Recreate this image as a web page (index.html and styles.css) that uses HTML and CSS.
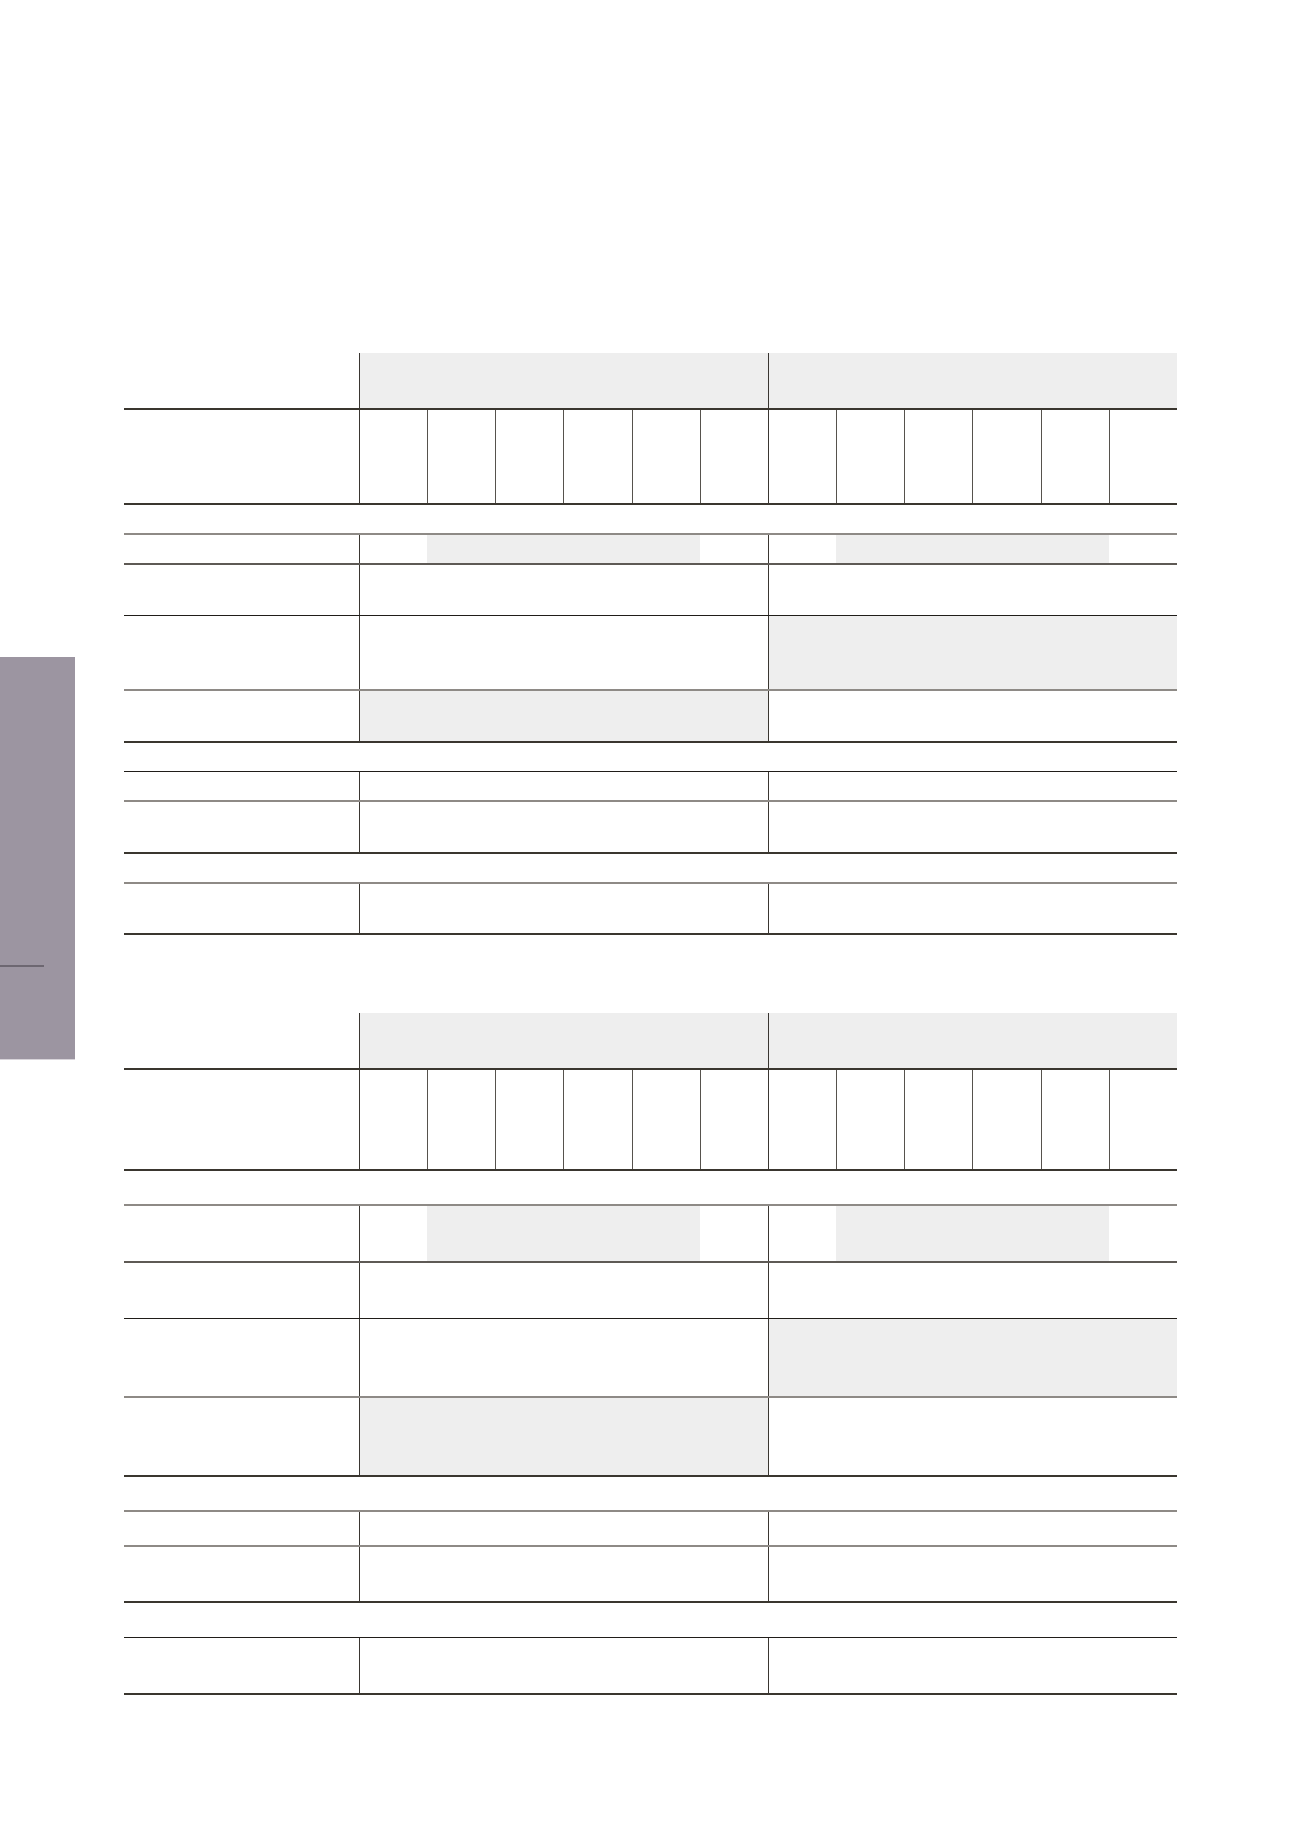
FILE: index.html
```html
<!DOCTYPE html>
<html lang="en">
<head>
<meta charset="utf-8">
<title>Tables</title>
<link rel="stylesheet" href="styles.css">
</head>
<body>
<div class="page">
  <div class="tab"><div class="tab-line"></div></div>
  <div class="content">
    <div class="tbl">
      <div class="row h57 b-thick">
        <div class="cell"></div><div class="cell g fill"></div><div class="cell g fill"></div>
      </div>
      <div class="row split h95 b-thick">
        <div class="cell"></div>
        <div class="cell g"></div><div class="cell s"></div><div class="cell s"></div><div class="cell s"></div><div class="cell s"></div><div class="cell s"></div>
        <div class="cell g"></div><div class="cell s"></div><div class="cell s"></div><div class="cell s"></div><div class="cell s"></div><div class="cell s"></div>
      </div>
      <div class="row section h30 b-gray"></div>
      <div class="row split h30 b-mid">
        <div class="cell"></div>
        <div class="cell g"></div><div class="cell fill"></div><div class="cell fill"></div><div class="cell fill"></div><div class="cell fill"></div><div class="cell"></div>
        <div class="cell g"></div><div class="cell fill"></div><div class="cell fill"></div><div class="cell fill"></div><div class="cell fill"></div><div class="cell"></div>
      </div>
      <div class="row h51 b-dark">
        <div class="cell"></div><div class="cell g"></div><div class="cell g"></div>
      </div>
      <div class="row h75 b-gray">
        <div class="cell"></div><div class="cell g"></div><div class="cell g fill"></div>
      </div>
      <div class="row h52 b-thick">
        <div class="cell"></div><div class="cell g fill"></div><div class="cell g"></div>
      </div>
      <div class="row section h29 b-dark"></div>
      <div class="row h30 b-gray">
        <div class="cell"></div><div class="cell g"></div><div class="cell g"></div>
      </div>
      <div class="row h52 b-thick">
        <div class="cell"></div><div class="cell g"></div><div class="cell g"></div>
      </div>
      <div class="row section h30 b-gray"></div>
      <div class="row h51 b-thick">
        <div class="cell"></div><div class="cell g"></div><div class="cell g"></div>
      </div>
    </div>

    <div class="tbl tbl-second">
      <div class="row h57 b-thick">
        <div class="cell"></div><div class="cell g fill"></div><div class="cell g fill"></div>
      </div>
      <div class="row split h101 b-thick">
        <div class="cell"></div>
        <div class="cell g"></div><div class="cell s"></div><div class="cell s"></div><div class="cell s"></div><div class="cell s"></div><div class="cell s"></div>
        <div class="cell g"></div><div class="cell s"></div><div class="cell s"></div><div class="cell s"></div><div class="cell s"></div><div class="cell s"></div>
      </div>
      <div class="row section h35 b-gray"></div>
      <div class="row split h57 b-mid">
        <div class="cell"></div>
        <div class="cell g"></div><div class="cell fill"></div><div class="cell fill"></div><div class="cell fill"></div><div class="cell fill"></div><div class="cell"></div>
        <div class="cell g"></div><div class="cell fill"></div><div class="cell fill"></div><div class="cell fill"></div><div class="cell fill"></div><div class="cell"></div>
      </div>
      <div class="row h56 b-dark">
        <div class="cell"></div><div class="cell g"></div><div class="cell g"></div>
      </div>
      <div class="row h79 b-gray">
        <div class="cell"></div><div class="cell g"></div><div class="cell g fill"></div>
      </div>
      <div class="row h79 b-thick">
        <div class="cell"></div><div class="cell g fill"></div><div class="cell g"></div>
      </div>
      <div class="row section h35 b-gray"></div>
      <div class="row h35 b-gray">
        <div class="cell"></div><div class="cell g"></div><div class="cell g"></div>
      </div>
      <div class="row h56 b-thick">
        <div class="cell"></div><div class="cell g"></div><div class="cell g"></div>
      </div>
      <div class="row section h35 b-dark"></div>
      <div class="row h57 b-thick">
        <div class="cell"></div><div class="cell g"></div><div class="cell g"></div>
      </div>
    </div>
  </div>
</div>
</body>
</html>
```
FILE: styles.css
```css
html, body {
  margin: 0;
  padding: 0;
  background: #ffffff;
  font-family: "Liberation Sans", Arial, sans-serif;
}

.page {
  display: flex;
  align-items: flex-start;
  width: 1300px;
  min-height: 1839px;
}

.tab {
  flex: none;
  width: 75px;
  height: 403px;
  margin-top: 657px;
  padding-top: 308px;
  box-sizing: border-box;
  background: #9c95a1;
  border-bottom: 1px solid #d8d4da;
}

.tab-line {
  width: 44px;
  height: 2px;
  background: #6d6771;
}

.content {
  flex: none;
  margin-left: 49px;
  padding-top: 353px;
  width: 1053px;
}

.tbl-second {
  margin-top: 78px;
}

.row {
  display: grid;
  grid-template-columns: 235px 409px 409px;
  box-sizing: border-box;
  width: 1053px;
}

.row.split {
  grid-template-columns: 235px repeat(12, 1fr);
}

.row.section {
  display: block;
}

.cell {
  box-sizing: border-box;
}

.cell.g {
  border-left: 1px solid #3a3631;
}

.cell.s {
  border-left: 1px solid #56524d;
}

.fill {
  background: #eeeeee;
}

.b-thick { border-bottom: 2px solid #3a362f; }
.b-gray  { border-bottom: 2px solid #8e8a86; }
.b-mid   { border-bottom: 2px solid #5e5a55; }
.b-dark  { border-bottom: 1px solid #201d19; }

.h29 { height: 29px; }
.h30 { height: 30px; }
.h35 { height: 35px; }
.h51 { height: 51px; }
.h52 { height: 52px; }
.h56 { height: 56px; }
.h57 { height: 57px; }
.h75 { height: 75px; }
.h79 { height: 79px; }
.h95 { height: 95px; }
.h101 { height: 101px; }
```
